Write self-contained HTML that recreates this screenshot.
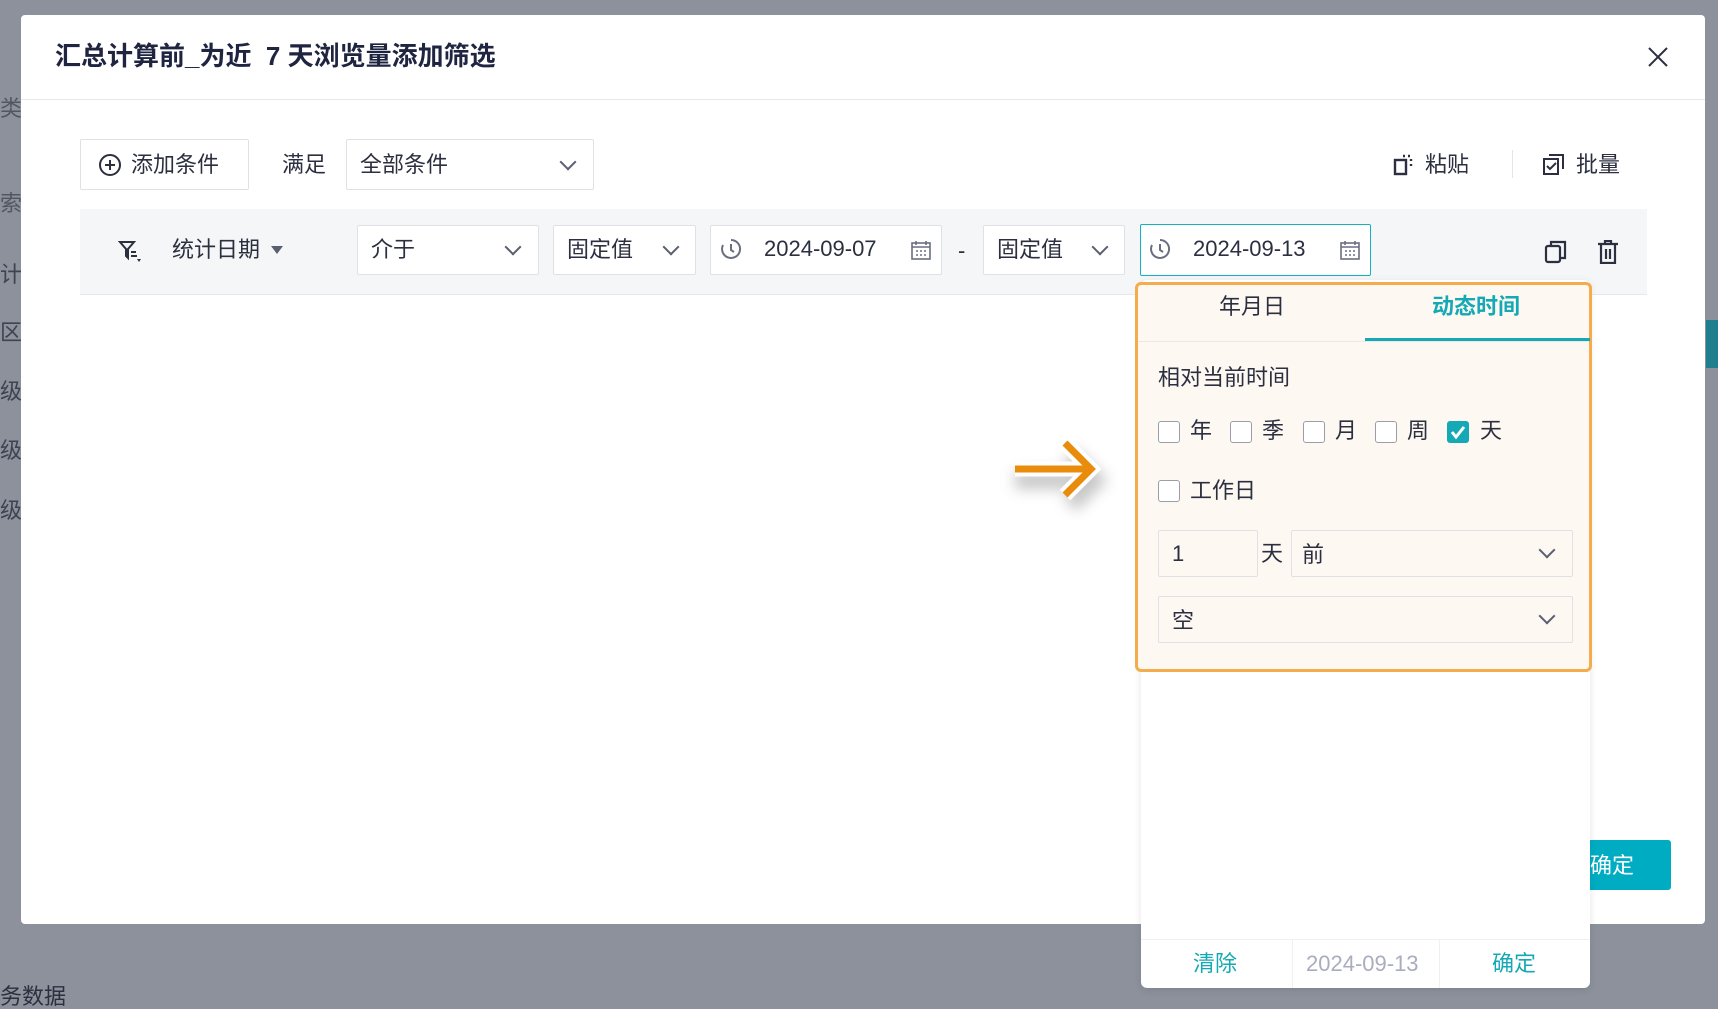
<!DOCTYPE html>
<html><head><meta charset="utf-8"><style>
*{box-sizing:border-box;margin:0;padding:0}
body{width:1718px;height:1003px;background:#8c919b;position:relative;overflow:hidden;font-family:"Liberation Sans","Noto Sans CJK SC",sans-serif;color:#2b2f3f}
.a{position:absolute}
.modal{left:21px;top:15px;width:1684px;height:909px;background:#fff;border-radius:4px}
.t{white-space:nowrap;font-size:22px;line-height:1}
.box{border:1px solid #dfe1e6;background:#fff;border-radius:2px}
.chev{width:12px;height:12px;border-right:2px solid #5a5f70;border-bottom:2px solid #5a5f70;transform:rotate(45deg)}
.cb{width:22px;height:22px;border:1.5px solid #9a9eaa;border-radius:3px;background:#fff}
</style></head><body>
<div class="a t" style="left:0;top:98px;color:#2b2f3f;opacity:.6">类</div>
<div class="a t" style="left:0;top:193px;color:#2b2f3f;opacity:.6">索</div>
<div class="a t" style="left:0;top:264px;color:#2b2f3f;opacity:.8">计</div>
<div class="a t" style="left:0;top:322px;color:#2b2f3f;opacity:.8">区</div>
<div class="a t" style="left:0;top:381px;color:#2b2f3f;opacity:.8">级</div>
<div class="a t" style="left:0;top:440px;color:#2b2f3f;opacity:.8">级</div>
<div class="a t" style="left:0;top:500px;color:#2b2f3f;opacity:.8">级</div>
<div class="a t" style="left:0;top:986px;color:#2b2f3f">务数据</div>
<div class="a" style="left:1706px;top:320px;width:12px;height:48px;background:#1f7f8f"></div>

<div class="a modal"></div>
<div class="a t" style="left:55px;top:43px;font-size:26px;font-weight:bold;color:#1f2540">汇总计算前_为近 &nbsp;7 天浏览量添加筛选</div>
<svg class="a" style="left:1647px;top:46px" width="22" height="22"><path d="M2 2L20 20M20 2L2 20" stroke="#2b2f3f" stroke-width="2"/></svg>
<div class="a" style="left:21px;top:99px;width:1684px;height:1px;background:#e6e8eb"></div>

<div class="a box" style="left:80px;top:139px;width:169px;height:51px"></div>
<svg class="a" style="left:98px;top:153px" width="24" height="24"><circle cx="12" cy="12" r="10" fill="none" stroke="#2b2f3f" stroke-width="2"/><path d="M12 7v10M7 12h10" stroke="#2b2f3f" stroke-width="2"/></svg>
<div class="a t" style="left:131px;top:154px">添加条件</div>
<div class="a t" style="left:282px;top:154px">满足</div>
<div class="a box" style="left:346px;top:139px;width:248px;height:51px"></div>
<div class="a t" style="left:360px;top:154px">全部条件</div>
<div class="a chev" style="left:562px;top:156px"></div>

<svg class="a" style="left:1393px;top:154px" width="22" height="22"><rect x="2" y="6" width="11" height="14" fill="none" stroke="#2b2f3f" stroke-width="2.4"/><path d="M10 2h2M15 2h2M18 5v2M18 10v2" stroke="#2b2f3f" stroke-width="2.4"/></svg>
<div class="a t" style="left:1425px;top:154px">粘贴</div>
<div class="a" style="left:1512px;top:150px;width:1px;height:28px;background:#e3e5e9"></div>
<svg class="a" style="left:1542px;top:153px" width="24" height="24"><rect x="2" y="6" width="14" height="15" fill="#fff" stroke="#2b2f3f" stroke-width="2"/><path d="M7 2h14v14" fill="none" stroke="#2b2f3f" stroke-width="2"/><path d="M5 13l3 3 6-6" fill="none" stroke="#2b2f3f" stroke-width="2"/></svg>
<div class="a t" style="left:1576px;top:154px">批量</div>

<div class="a" style="left:80px;top:209px;width:1567px;height:86px;background:#f5f6f8;border-bottom:1px solid #e6e8eb"></div>
<svg class="a" style="left:118px;top:239px" width="28" height="26"><path d="M2 3h14l-6 7v9l-2-2v-7z" fill="none" stroke="#2b2f3f" stroke-width="2"/><path d="M13 13h5M13 17h6" stroke="#2b2f3f" stroke-width="2"/><path d="M19 20l4 0-2 3z" fill="#2b2f3f"/></svg>
<div class="a t" style="left:172px;top:239px">统计日期</div>
<svg class="a" style="left:271px;top:245px" width="12" height="10"><path d="M0 1h12L6 9z" fill="#5a5f70"/></svg>
<div class="a box" style="left:357px;top:225px;width:182px;height:50px"></div>
<div class="a t" style="left:371px;top:239px">介于</div>
<div class="a chev" style="left:507px;top:241px"></div>
<div class="a box" style="left:553px;top:225px;width:143px;height:50px"></div>
<div class="a t" style="left:567px;top:239px">固定值</div>
<div class="a chev" style="left:665px;top:241px"></div>
<div class="a box" style="left:710px;top:225px;width:232px;height:50px"></div>
<svg class="a" style="left:720px;top:238px" width="22" height="22"><path d="M11 2a9 9 0 1 1-8 5M11 6v6l3 2" fill="none" stroke="#6a6f80" stroke-width="2"/></svg>
<div class="a t" style="left:764px;top:238px">2024-09-07</div>
<svg class="a" style="left:911px;top:240px" width="20" height="20"><rect x="1" y="3" width="18" height="16" fill="none" stroke="#6a6f80" stroke-width="1.6"/><path d="M1 7h18M5 1v4M15 1v4M5 11h2M9 11h2M13 11h2M5 15h2M9 15h2M13 15h2" stroke="#6a6f80" stroke-width="1.6"/></svg>
<div class="a t" style="left:958px;top:240px">-</div>
<div class="a box" style="left:983px;top:225px;width:142px;height:50px"></div>
<div class="a t" style="left:997px;top:239px">固定值</div>
<div class="a chev" style="left:1094px;top:241px"></div>
<div class="a box" style="left:1140px;top:224px;width:231px;height:52px;border-color:#14b1c0"></div>
<svg class="a" style="left:1149px;top:238px" width="22" height="22"><path d="M11 2a9 9 0 1 1-8 5M11 6v6l3 2" fill="none" stroke="#6a6f80" stroke-width="2"/></svg>
<div class="a t" style="left:1193px;top:238px">2024-09-13</div>
<svg class="a" style="left:1340px;top:240px" width="20" height="20"><rect x="1" y="3" width="18" height="16" fill="none" stroke="#6a6f80" stroke-width="1.6"/><path d="M1 7h18M5 1v4M15 1v4M5 11h2M9 11h2M13 11h2M5 15h2M9 15h2M13 15h2" stroke="#6a6f80" stroke-width="1.6"/></svg>
<svg class="a" style="left:1544px;top:240px" width="24" height="24"><rect x="2" y="6" width="14" height="16" rx="2" fill="none" stroke="#2b2f3f" stroke-width="2.2"/><path d="M7 6V2h14v16h-5" fill="none" stroke="#2b2f3f" stroke-width="2.2"/></svg>
<svg class="a" style="left:1597px;top:240px" width="22" height="24"><path d="M1 4h20M8 4V1h6v3M4 4v19h14V4M9 9v10M13 9v10" fill="none" stroke="#2b2f3f" stroke-width="2.2"/></svg>

<div class="a" style="left:1578px;top:840px;width:93px;height:50px;background:#00acc1;border-radius:3px"></div>
<div class="a t" style="left:1590px;top:855px;color:#fff">确定</div>

<svg class="a" style="left:995px;top:425px" width="125" height="115"><defs><filter id="s" x="-30%" y="-30%" width="160%" height="160%"><feGaussianBlur stdDeviation="7"/></filter></defs><path d="M20 55H95M75 30L100 55 75 80" fill="none" stroke="#000" stroke-opacity=".22" stroke-width="18" filter="url(#s)"/><path d="M20 44H93M70 18L96 44 70 70" fill="none" stroke="#fff" stroke-width="15"/><path d="M20 44H93M70 18L96 44 70 70" fill="none" stroke="#e98b0b" stroke-width="7"/></svg>

<div class="a" style="left:1141px;top:280px;width:449px;height:708px;background:#fff;border-radius:6px;box-shadow:0 2px 8px rgba(0,0,0,.1)"></div>
<div class="a" style="left:1135px;top:282px;width:457px;height:390px;background:#fdf8f2;border:3px solid #f4ac4c;border-radius:6px"></div>
<div class="a" style="left:1138px;top:341px;width:451px;height:1px;background:#ece7e0"></div>
<div class="a" style="left:1365px;top:338px;width:225px;height:3px;background:#14a9b5"></div>
<div class="a t" style="left:1219px;top:296px">年月日</div>
<div class="a t" style="left:1432px;top:296px;color:#14a9b5;font-weight:bold">动态时间</div>
<div class="a t" style="left:1158px;top:367px">相对当前时间</div>
<div class="a cb" style="left:1158px;top:421px"></div><div class="a t" style="left:1190px;top:420px">年</div>
<div class="a cb" style="left:1230px;top:421px"></div><div class="a t" style="left:1262px;top:420px">季</div>
<div class="a cb" style="left:1303px;top:421px"></div><div class="a t" style="left:1335px;top:420px">月</div>
<div class="a cb" style="left:1375px;top:421px"></div><div class="a t" style="left:1407px;top:420px">周</div>
<div class="a" style="left:1447px;top:421px;width:22px;height:22px;background:#14a9b5;border-radius:3px"></div>
<svg class="a" style="left:1447px;top:421px" width="22" height="22"><path d="M5 11l4 5 8-10" fill="none" stroke="#fff" stroke-width="3"/></svg>
<div class="a t" style="left:1480px;top:420px">天</div>
<div class="a cb" style="left:1158px;top:480px"></div><div class="a t" style="left:1190px;top:480px">工作日</div>
<div class="a box" style="left:1158px;top:530px;width:100px;height:47px;background:#fdf8f2"></div>
<div class="a t" style="left:1172px;top:543px">1</div>
<div class="a t" style="left:1261px;top:543px">天</div>
<div class="a box" style="left:1291px;top:530px;width:282px;height:47px;background:#fdf8f2"></div>
<div class="a t" style="left:1302px;top:544px">前</div>
<div class="a chev" style="left:1541px;top:544px"></div>
<div class="a box" style="left:1158px;top:596px;width:415px;height:47px;background:#fdf8f2"></div>
<div class="a t" style="left:1172px;top:610px">空</div>
<div class="a chev" style="left:1541px;top:610px"></div>

<div class="a" style="left:1141px;top:939px;width:449px;height:1px;background:#eef0f3"></div>
<div class="a" style="left:1292px;top:940px;width:1px;height:48px;background:#eef0f3"></div>
<div class="a" style="left:1439px;top:940px;width:1px;height:48px;background:#eef0f3"></div>
<div class="a t" style="left:1193px;top:953px;color:#14a9b5">清除</div>
<div class="a t" style="left:1306px;top:953px;color:#a9adbd">2024-09-13</div>
<div class="a t" style="left:1492px;top:953px;color:#14a9b5">确定</div>
</body></html>
